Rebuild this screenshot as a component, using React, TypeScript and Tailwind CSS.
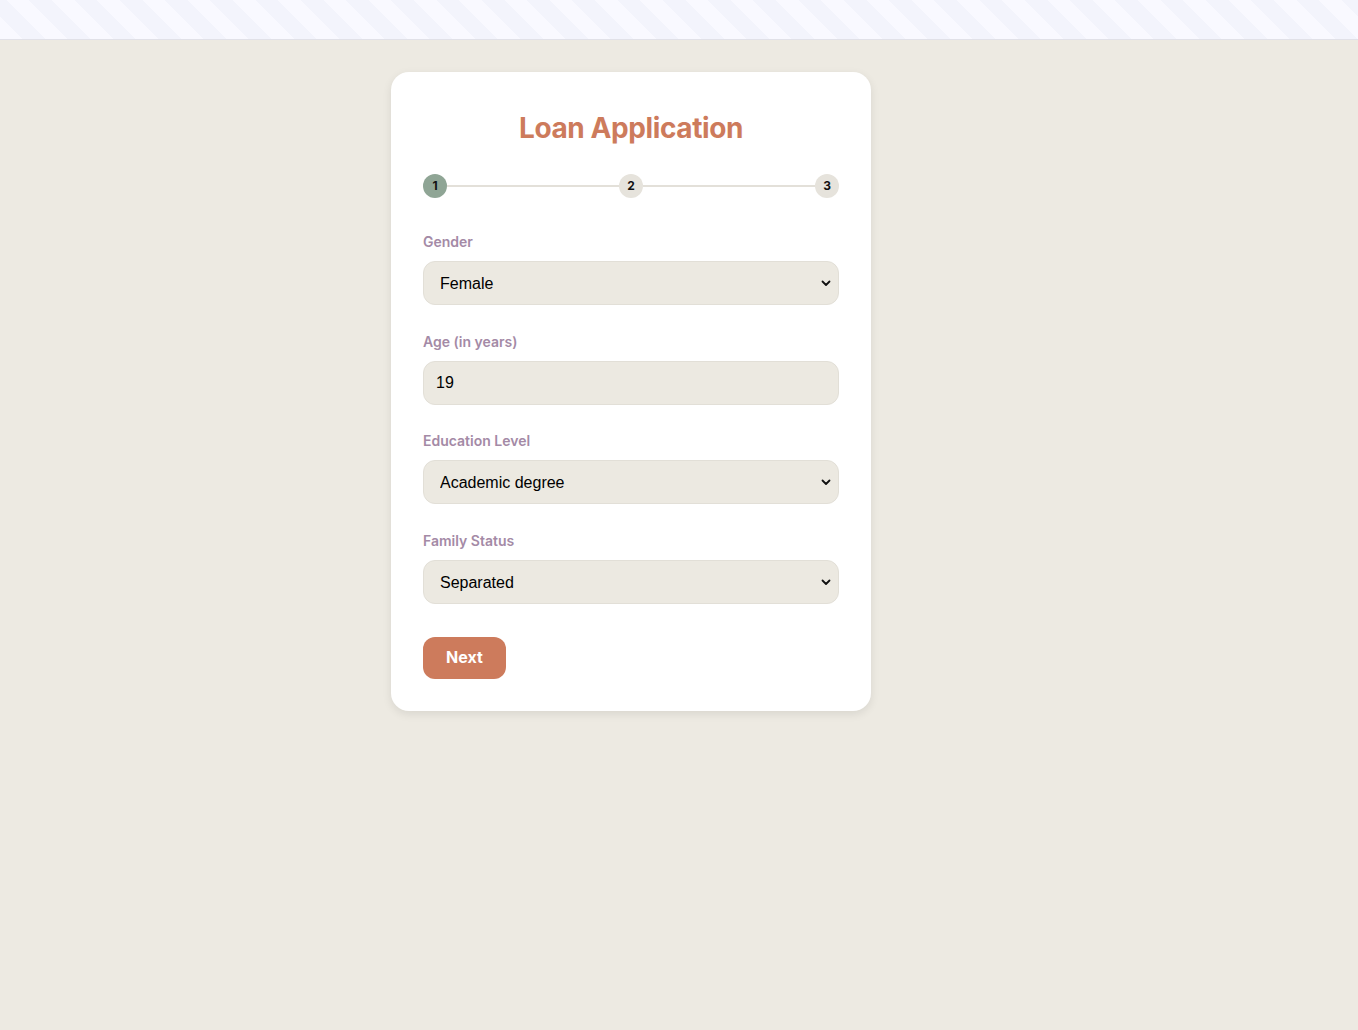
import React, { useState } from "react";

const Chevron = () => (
  <svg
    className="pointer-events-none absolute right-[8px] top-1/2 -translate-y-1/2"
    width="10"
    height="10"
    viewBox="0 0 10 10"
    fill="none"
  >
    <path d="M1.5 3.5 L5 7 L8.5 3.5" stroke="#111" strokeWidth="1.8" strokeLinecap="round" strokeLinejoin="round" />
  </svg>
);

const SelectField = ({
  label,
  value,
  options,
  onChange,
  className,
}: {
  label: string;
  value: string;
  options: string[];
  onChange: (v: string) => void;
  className?: string;
}) => (
  <div className={className}>
    <label className="block text-sm leading-5 font-semibold text-[#a48aa6] mb-[9px]">{label}</label>
    <div className="relative">
      <select
        value={value}
        onChange={(e) => onChange(e.target.value)}
        className="w-full h-[44px] appearance-none rounded-xl border border-[#e2dfd7] bg-[#ece9e1] pl-4 pr-8 pt-[1px] text-base text-black font-['Liberation_Sans',Arial,sans-serif] outline-none"
      >
        {options.map((o) => (
          <option key={o}>{o}</option>
        ))}
      </select>
      <Chevron />
    </div>
  </div>
);

const App = () => {
  const [gender, setGender] = useState("Female");
  const [age, setAge] = useState("19");
  const [education, setEducation] = useState("Academic degree");
  const [family, setFamily] = useState("Separated");

  const steps = [1, 2, 3];

  return (
    <div className="min-h-[1030px] bg-[#edeae2] font-['Inter',sans-serif]">
      <div className="h-[40px] border-b border-[#e1e1e8] bg-[repeating-linear-gradient(45deg,#f9f9ff_0px,#f9f9ff_16px,#f3f4fc_16px,#f3f4fc_32px)]" />

      {/* card sits left of page centre in the original */}
      <div className="pt-[32px] pl-[391px]">
        <div className="w-[480px] rounded-[18px] bg-white px-8 pt-[39px] pb-8 shadow-[0_3px_10px_rgba(0,0,0,0.09)]">
          <h1 className="text-center text-[28px] leading-[34px] tracking-[-0.4px] font-bold text-[#cd7b5c]">
            Loan Application
          </h1>

          <div className="mt-[29px] flex items-center">
            {steps.map((s, i) => (
              <React.Fragment key={s}>
                <div
                  className={
                    s === 1
                      ? "flex h-6 w-6 shrink-0 items-center justify-center rounded-full bg-[#8fa595] text-xs font-bold text-[#111]"
                      : "flex h-6 w-6 shrink-0 items-center justify-center rounded-full bg-[#e6e3dc] text-xs font-bold text-[#111]"
                  }
                >
                  {s}
                </div>
                {i < steps.length - 1 && <div className="h-[2px] flex-1 bg-[#e3e0d9]" />}
              </React.Fragment>
            ))}
          </div>

          <SelectField
            className="mt-[34px]"
            label="Gender"
            value={gender}
            onChange={setGender}
            options={["Female", "Male"]}
          />

          <div className="mt-[27px]">
            <label className="block text-sm leading-5 font-semibold text-[#a48aa6] mb-[9px]">Age (in years)</label>
            <input
              type="number"
              value={age}
              onChange={(e) => setAge(e.target.value)}
              className="w-full h-[44px] rounded-xl border border-[#e2dfd7] bg-[#ece9e1] px-3 text-base text-black font-['Liberation_Sans',Arial,sans-serif] outline-none [appearance:textfield] [&::-webkit-inner-spin-button]:appearance-none"
            />
          </div>

          <SelectField
            className="mt-[26px]"
            label="Education Level"
            value={education}
            onChange={setEducation}
            options={["Secondary", "Higher education", "Academic degree"]}
          />

          <SelectField
            className="mt-[27px]"
            label="Family Status"
            value={family}
            onChange={setFamily}
            options={["Married", "Single", "Separated", "Widowed"]}
          />

          <button className="mt-[33px] h-[42px] w-[83px] rounded-xl bg-[#cd7b5c] pb-[2px] text-base font-bold text-white">
            Next
          </button>
        </div>
      </div>
    </div>
  );
};

export default App;
